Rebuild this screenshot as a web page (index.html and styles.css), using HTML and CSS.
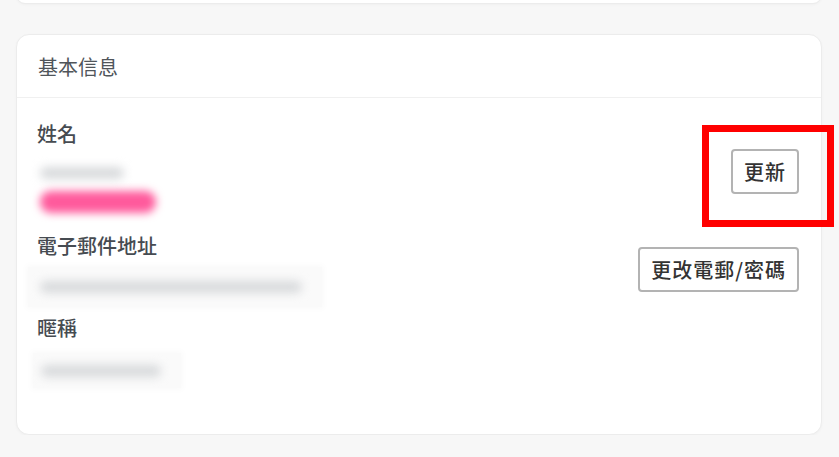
FILE: index.html
```html
<!DOCTYPE html>
<html>
<head>
    <meta charset="utf-8">
    <meta name="viewport" content="width=device-width, initial-scale=1">
    <title>基本信息</title>
    <link rel="stylesheet" href="styles.css">
</head>
<body>
    <div class="card card-prev"></div>

    <div class="card">
        <div class="card-head">基本信息</div>
        <div class="card-body">
            <div class="row">
                <div class="info">
                    <div class="label">姓名</div>
                    <div class="value value-name">
                        <span class="blur blur-grey" style="width: 84px"></span>
                        <span class="blur blur-pink" style="width: 116px"></span>
                    </div>
                </div>
                <div class="action action-first">
                    <button class="btn">更新</button>
                    <span class="highlight"></span>
                </div>
            </div>

            <div class="row">
                <div class="info">
                    <div class="label">電子郵件地址</div>
                    <div class="value value-email">
                        <span class="blur blur-grey" style="width: 262px"></span>
                    </div>
                </div>
                <div class="action action-second">
                    <button class="btn">更改電郵/密碼</button>
                </div>
            </div>

            <div class="row">
                <div class="info">
                    <div class="label">暱稱</div>
                    <div class="value value-nick">
                        <span class="blur blur-grey" style="width: 120px"></span>
                    </div>
                </div>
            </div>
        </div>
    </div>
</body>
</html>
```

FILE: styles.css
```css
body {
  margin: 0;
  background: #f7f7f7;
  font-family: "Noto Sans CJK TC", "Noto Sans", sans-serif;
  color: #474c52;
}

.card {
  margin: 0 17px 0 16px;
  background: #fff;
  border: 1px solid #ececec;
  border-radius: 13px;
  box-shadow: 0 1px 3px rgba(0, 0, 0, 0.03);
}
.card-prev {
  height: 16px;
  margin-top: -14px;
  margin-bottom: 30px;
}

.card-head {
  height: 62px;
  padding: 0 21px;
  display: flex;
  align-items: center;
  font-size: 20px;
  color: #50555a;
  border-bottom: 1px solid #f0f0f0;
}

.card-body {
  padding: 22px 22px 46px 20px;
}

.row {
  display: flex;
  justify-content: space-between;
  align-items: flex-start;
}

.label {
  font-size: 20px;
  line-height: 28px;
  font-weight: 500;
  color: #464b51;
}

.value {
  display: flex;
  flex-direction: column;
  justify-content: center;
  gap: 12px;
  background: #fafafa;
  box-shadow: 0 0 6px 2px #fafafa;
}
.value-name {
  width: 132px;
  height: 80px;
  margin: 2px 0 2px -5px;
  padding-left: 8px;
  background: transparent;
  box-shadow: none;
}
.value-email {
  width: 282px;
  height: 40px;
  margin: 7px 0 7px -9px;
  padding-left: 12px;
}
.value-nick {
  width: 140px;
  height: 35px;
  margin: 11px 0 0 -4px;
  padding-left: 8px;
}

.blur {
  display: block;
  height: 12px;
  border-radius: 6px;
  filter: blur(5px);
}
.blur-grey {
  background: #d8dadc;
}
.blur-pink {
  height: 22px;
  border-radius: 11px;
  background: #ff5a9c;
  filter: blur(4px);
}

.action {
  position: relative;
}
.action-first {
  margin-top: 29px;
}
.action-second {
  margin-top: 15px;
}

.btn {
  height: 45px;
  padding: 0 11px;
  font-family: inherit;
  font-size: 20px;
  font-weight: 500;
  letter-spacing: 1px;
  color: #333;
  background: #fff;
  border: 2px solid #b3b3b3;
  border-radius: 4px;
}

.highlight {
  position: absolute;
  left: -29px;
  top: -24px;
  right: -35px;
  bottom: -33px;
  border: 7px solid #ff0000;
  pointer-events: none;
}
```
